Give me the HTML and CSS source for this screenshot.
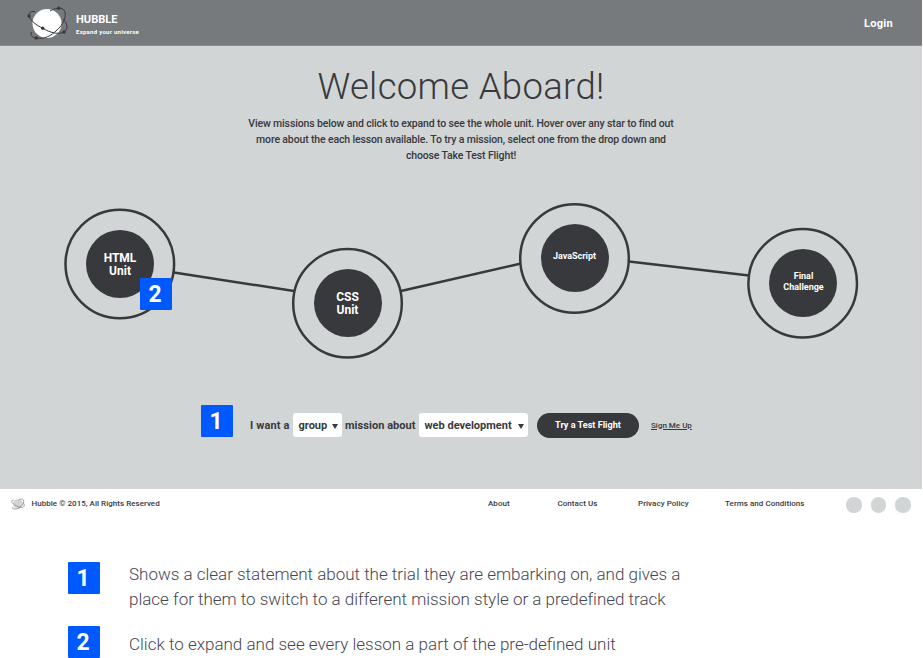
FILE: index.html
```
<!DOCTYPE html>
<html lang="en">
<head>
<meta charset="utf-8">
<title>Hubble</title>
<link rel="stylesheet" href="styles.css">
</head>
<body>
<div class="app">
  <header class="header">
    <svg class="logo" viewBox="0 0 42 36" aria-hidden="true">
      <circle cx="20" cy="18.500" r="14.500" fill="#fff"/>
      <g fill="none" stroke="#38393c" stroke-width="1">
        <path d="M8.500 7C5 5.500 1.500 7 2 11C4 16 9 20 15.700 23.300C23 27.500 31 30 37 27C42 23.500 40 18 36 14"/>
        <path d="M23 6C27 3.500 35 1 37.500 6C40 11 36 20 30 25C24 31 17 34.500 9.300 33C5 32.500 3 30 4.500 27"/>
      </g>
      <g fill="#38393c"><circle cx="2" cy="11" r="1.700"/><circle cx="31.700" cy="3.300" r="1.700"/><circle cx="15.700" cy="23.300" r="1.700"/><circle cx="37" cy="27" r="1.700"/><circle cx="9.300" cy="33" r="1.700"/></g>
    </svg>
    <div class="brand"><div class="name">HUBBLE</div><div class="tagline">Expand your universe</div></div>
    <a class="login">Login</a>
  </header>
  <main class="main">
    <h1 class="title">Welcome Aboard!</h1>
    <p class="intro">View missions below and click to expand to see the whole unit. Hover over any star to find out<br>more about the each lesson available. To try a mission, select one from the drop down and<br>choose Take Test Flight!</p>
    <div class="map">
      <svg class="links" viewBox="0 0 922 180" aria-hidden="true">
        <path d="M174 82.500L294 101M401 101L521 73.500M629 71.500L749 85.500"/>
        <circle cx="119.800" cy="74" r="54.300"/><circle cx="347.500" cy="113.300" r="54.300"/><circle cx="574.500" cy="68.500" r="54.300"/><circle cx="802.700" cy="93.200" r="54.300"/>
      </svg>
      <div class="node html"><div class="star">HTML<br>Unit</div></div>
      <div class="node css"><div class="star">CSS<br>Unit</div></div>
      <div class="node js"><div class="star small">JavaScript</div></div>
      <div class="node final"><div class="star small">Final<br>Challenge</div></div>
      <div class="marker pin">2</div>
    </div>
    <div class="trial">
      <div class="marker">1</div>
      <span class="want">I want a</span>
      <div class="select group"><span>group</span><svg viewBox="0 0 6 5"><path d="M0 0H6L3 5Z"/></svg></div>
      <span class="about">mission about</span>
      <div class="select topic"><span>web development</span><svg viewBox="0 0 6 5"><path d="M0 0H6L3 5Z"/></svg></div>
      <div class="button">Try a Test Flight</div>
      <a class="signup">Sign Me Up</a>
    </div>
  </main>
  <footer class="footer">
    <svg class="mini" viewBox="0 0 42 36" aria-hidden="true">
      <circle cx="20.500" cy="18" r="14.500" fill="#d1d5d6"/>
      <g fill="none" stroke="#77797b" stroke-width="2">
        <path d="M8.500 7C5 5.500 1.500 7 2 11C4 16 9 20 15.700 23.300C23 27.500 31 30 37 27C42 23.500 40 18 36 14"/>
        <path d="M23 6C27 3.500 35 1 37.500 6C40 11 36 20 30 25C24 31 17 34.500 9.300 33C5 32.500 3 30 4.500 27"/>
      </g>
    </svg>
    <span class="copy">Hubble © 2015, All Rights Reserved</span>
    <a class="f1">About</a><a class="f2">Contact Us</a><a class="f3">Privacy Policy</a><a class="f4">Terms and Conditions</a>
    <div class="dots"><i></i><i></i><i></i></div>
  </footer>
</div>
<section class="notes">
  <div class="note"><div class="marker">1</div><p>Shows a clear statement about the trial they are embarking on, and gives a<br>place for them to switch to a different mission style or a predefined track</p></div>
  <div class="note"><div class="marker">2</div><p>Click to expand and see every lesson a part of the pre-defined unit</p></div>
</section>
</body>
</html>
```
FILE: styles.css
```
* { box-sizing: border-box; }
body { margin: 0; height: 658px; overflow: hidden; background: #fff; color: #38393c; font-family: Roboto, sans-serif; white-space: nowrap; }
.app { width: 922px; }
.header { height: 46px; background: #767a7d; border-bottom: 1px solid #8b8f91; display: flex; align-items: flex-start; padding: 0 29px 0 27px; color: #fff; }
.logo { width: 42px; height: 36px; margin-top: 5px; overflow: visible; }
.brand { margin: 13px 0 0 7px; }
.name { font-size: 11.1px; line-height: 14px; font-weight: 700; }
.tagline { font-size: 6px; line-height: 8px; font-weight: 700; margin-top: 1px; letter-spacing: .27px; }
.login { margin: 17px 0 0 auto; font-size: 11px; line-height: 14px; font-weight: 700; letter-spacing: .3px; }
.main { height: 443px; background: #d1d5d6; display: flow-root; }
.title { margin: 18px 0 0; text-align: center; font-size: 36.5px; line-height: 46px; font-weight: 300; letter-spacing: .33px; }
.intro { margin: 6px 0 0; text-align: center; font-size: 10.5px; line-height: 16px; font-weight: 500; letter-spacing: -.14px; }
.map { position: relative; height: 180px; margin-top: 26px; }
.links { display: block; width: 922px; height: 180px; fill: none; stroke: #38393c; stroke-width: 2.5; }
.node { position: absolute; width: 68px; height: 68px; }
.html { left: 86px; top: 40px; }
.css { left: 313.5px; top: 79.3px; }
.js { left: 540.5px; top: 34.4px; }
.final { left: 769px; top: 59.3px; }
.star { width: 68px; height: 68px; border-radius: 50%; background: #38393c; color: #fff; display: flex; align-items: center; justify-content: center; text-align: center; font-size: 12px; line-height: 13px; font-weight: 700; padding-top: 2px; }
.css .star { padding-top: 1px; }
.small { font-size: 9px; line-height: 11px; padding: 0 0 3px; }
.final .star { padding-left: 1px; }
.marker { width: 32px; height: 32px; flex: none; background: #0058ff; color: #fff; font-size: 23px; line-height: 33px; font-weight: 700; text-align: center; border-radius: 1px; padding-right: 2px; }
.pin { position: absolute; left: 140px; top: 88px; line-height: 34px; }
.trial { display: flex; align-items: center; height: 40px; margin: 35px 0 0 201px; font-size: 11px; font-weight: 700; }
.trial .marker { margin-top: -8px; }
.want { margin-left: 17px; width: 43px; letter-spacing: .15px; }
.select { height: 24px; background: #fff; border-radius: 3px; display: flex; align-items: center; justify-content: space-between; padding: 0 4px 0 5.5px; }
.select svg { width: 6px; height: 5px; margin-top: 3px; fill: #38393c; }
.group { width: 49px; }
.about { width: 71px; margin: 0 3px 0 3px; letter-spacing: .05px; }
.topic { width: 109px; }
.button { width: 102px; height: 25px; margin-left: 9px; border-radius: 13px; background: #38393c; color: #fff; font-size: 9.1px; line-height: 25px; text-align: center; }
.signup { margin-left: 12px; font-size: 8px; font-weight: 500; text-decoration: underline; }
.footer { height: 31px; display: flex; align-items: center; font-size: 8px; font-weight: 500; padding-bottom: 2px; }
.mini { width: 14px; height: 12px; margin-left: 11px; }
.copy { margin-left: 6.5px; width: 456.5px; letter-spacing: .03px; }
.f1 { width: 69.5px; } .f2 { width: 80.5px; } .f3 { width: 87px; } .f4 { width: 121px; }
.f1, .f2, .f3, .f4 { letter-spacing: .05px; }
.dots { display: flex; gap: 9px; padding-top: 3px; }
.dots i { width: 15.5px; height: 15.5px; border-radius: 50%; background: #d1d5d6; }
.notes { padding: 42px 0 0 68px; color: #454653; }
.note { display: flex; align-items: flex-start; height: 64px; }
.note p { margin: 0 0 0 29px; font-size: 17px; line-height: 25px; font-weight: 300; letter-spacing: -.01px; }
.note + .note p { margin-top: 6px; letter-spacing: 0; }
```
